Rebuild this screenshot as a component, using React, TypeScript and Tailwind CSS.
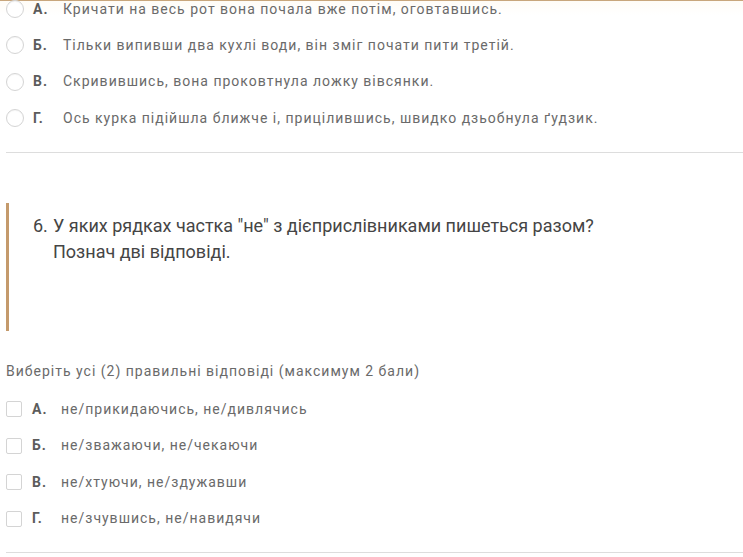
import React from 'react'

const firstOptions = [
    { label: 'А.', text: 'Кричати на весь рот вона почала вже потім, оговтавшись.' },
    { label: 'Б.', text: 'Тільки випивши два кухлі води, він зміг почати пити третій.' },
    { label: 'В.', text: 'Скривившись, вона проковтнула ложку вівсянки.' },
    { label: 'Г.', text: 'Ось курка підійшла ближче і, прицілившись, швидко дзьобнула ґудзик.' },
];

const secondOptions = [
    { label: 'А.', text: 'не/прикидаючись, не/дивлячись' },
    { label: 'Б.', text: 'не/зважаючи, не/чекаючи' },
    { label: 'В.', text: 'не/хтуючи, не/здужавши' },
    { label: 'Г.', text: 'не/зчувшись, не/навидячи' },
];

export default function App() {
    return (
        <div className="h-[557px] w-[743px] overflow-hidden bg-white font-['Roboto','Liberation_Sans',sans-serif]">
            <div className="border-t border-[#c8a67c] bg-gradient-to-b from-[#fffcf6] to-white to-[14px]">
                <ul className="-mt-[10px] pl-[6px]">
                    {firstOptions.map((opt) => (
                        <li key={opt.label} className="flex h-[36.3px] items-center">
                            <span className="h-[18px] w-[18px] shrink-0 rounded-full border border-[#d4d4d4] bg-white shadow-[inset_0_1px_1px_rgba(0,0,0,0.04)]" />
                            <span className="ml-[9px] w-[30px] shrink-0 text-[14px] font-bold tracking-[1px] text-[#5c5c5c]">{opt.label}</span>
                            <span className="text-[14px] tracking-[1px] text-[#6a6a6a]">{opt.text}</span>
                        </li>
                    ))}
                </ul>
            </div>
            <div className="ml-[6px] mt-[16px] border-t border-[#dddddd]" />

            <div className="ml-[6px] mt-[50px] h-[128px] border-l-[3px] border-[#c49a6c] pl-[24px] pt-[10px]">
                <div className="flex text-[18px] leading-[26px] text-[#454545]">
                    <span className="w-[20px] shrink-0">6.</span>
                    <p>
                        У яких рядках частка "не" з дієприслівниками пишеться разом?
                        <br />
                        Познач дві відповіді.
                    </p>
                </div>
            </div>

            <p className="ml-[6px] mt-[30px] text-[14px] leading-[20px] tracking-[1px] text-[#6a6a6a]">
                Виберіть усі (2) правильні відповіді (максимум 2 бали)
            </p>
            <ul className="mt-[10px] pl-[6px]">
                {secondOptions.map((opt) => (
                    <li key={opt.label} className="flex h-[36.4px] items-center">
                        <span className="h-[16px] w-[16px] shrink-0 rounded-[2px] border border-[#d4d4d4] bg-white" />
                        <span className="ml-[10px] w-[29px] shrink-0 text-[14px] font-bold tracking-[1px] text-[#5c5c5c]">{opt.label}</span>
                        <span className="text-[14px] tracking-[1px] text-[#6a6a6a]">{opt.text}</span>
                    </li>
                ))}
            </ul>
            <div className="ml-[6px] mt-[15px] border-t border-[#dddddd]" />
        </div>
    )
}
